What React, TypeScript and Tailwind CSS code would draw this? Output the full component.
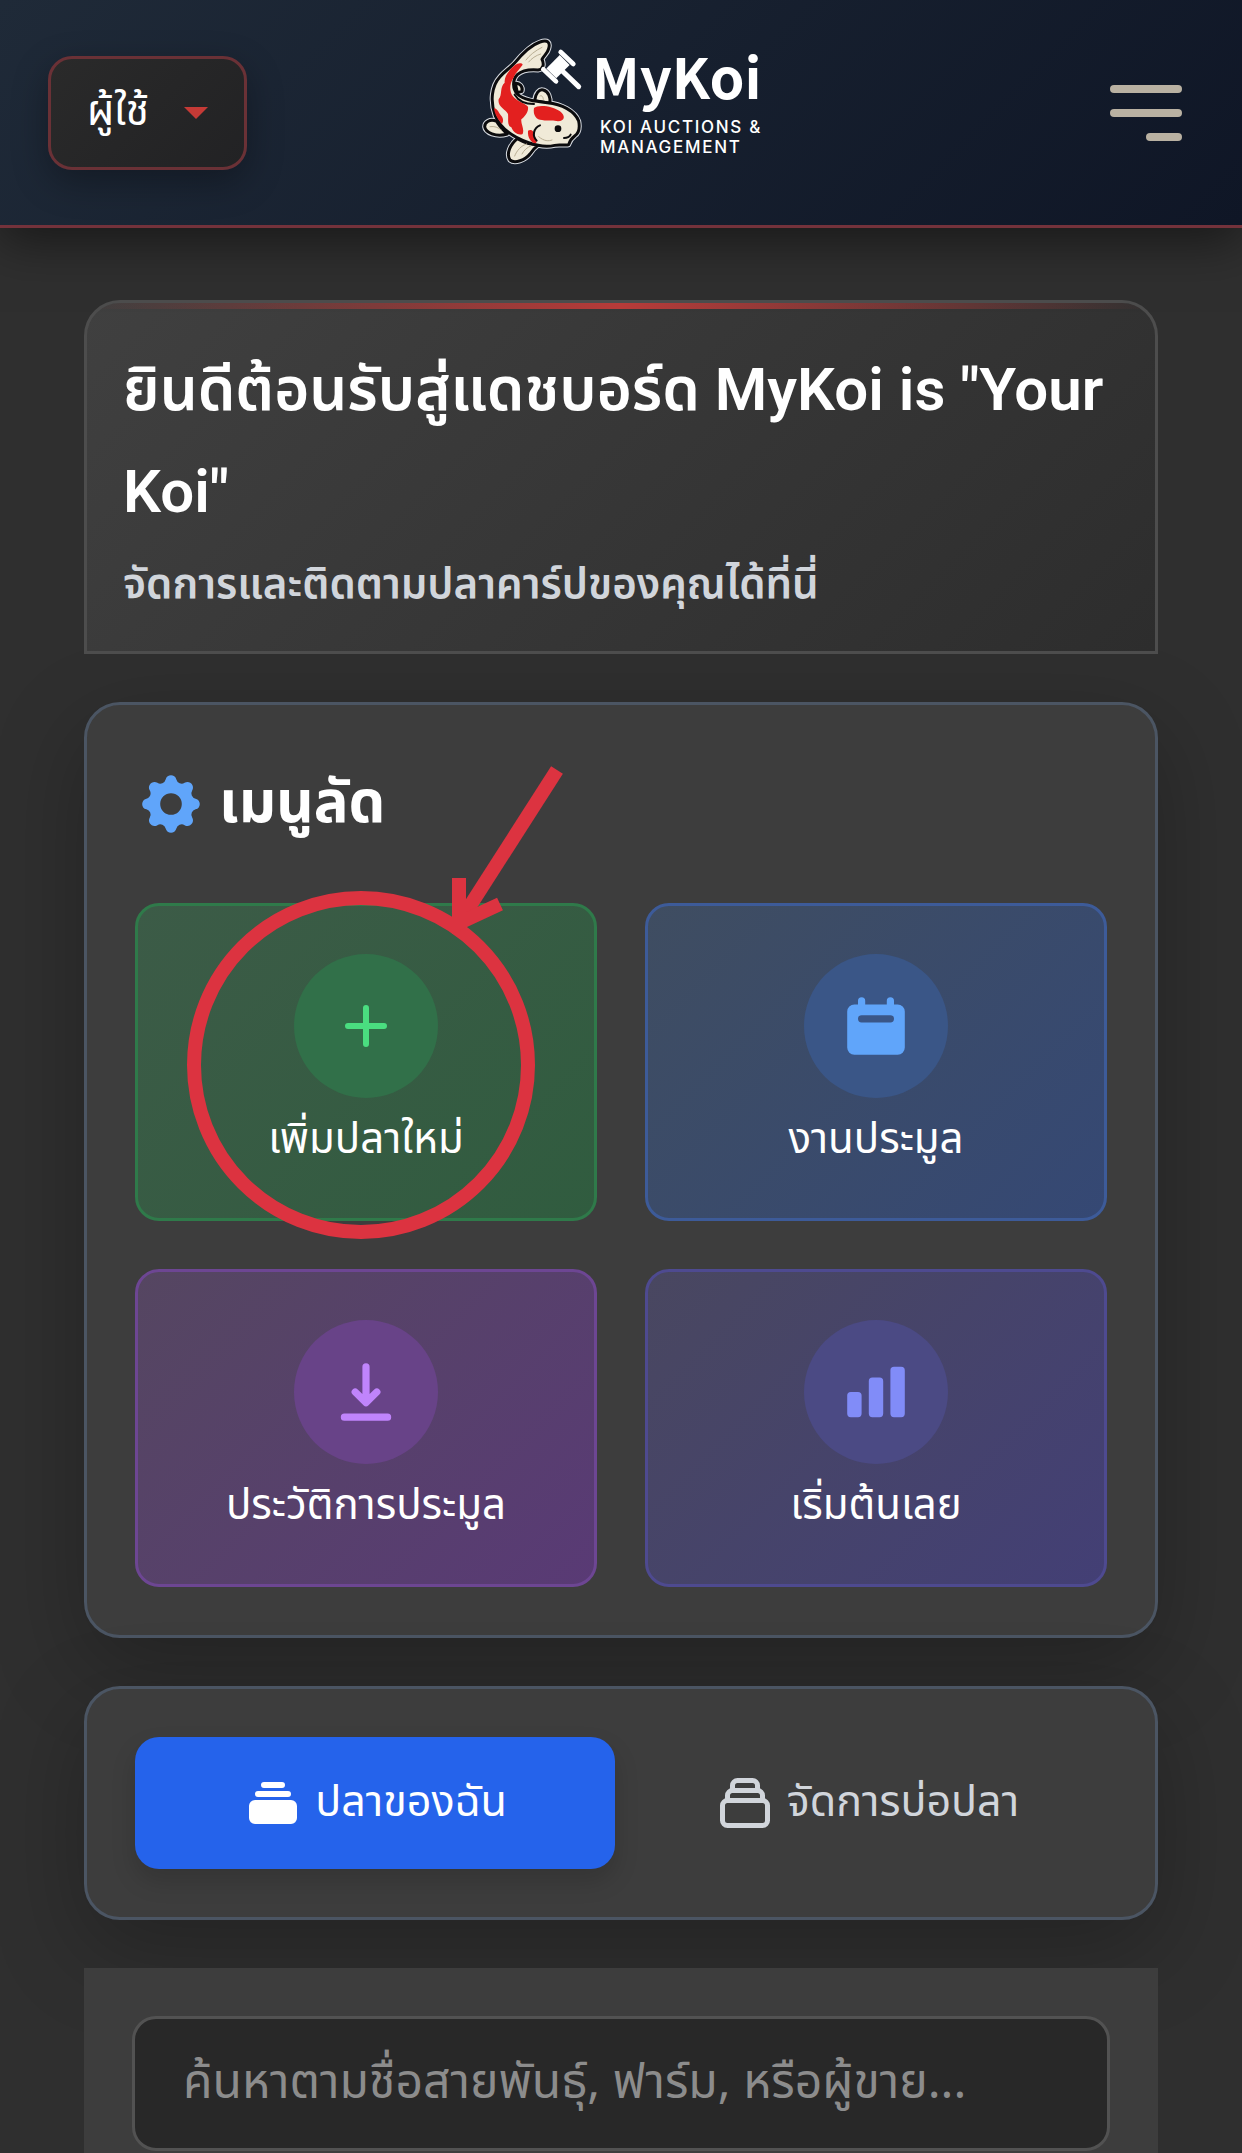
import type { ReactNode } from "react";
import clsx from "clsx";
import {
  HiCalendar,
  HiChartBar,
  HiCog,
  HiCollection,
  HiDownload,
  HiOutlineCollection
} from "react-icons/hi";

type QuickAction = {
  id: string;
  label: string;
  tile: string;
  bubble: string;
  icon: ReactNode;
};

function PlusIcon() {
  return (
    <svg viewBox="0 0 24 24" className="size-18" fill="none" stroke="currentColor" strokeWidth="2" strokeLinecap="round">
      <path d="M12 6v12M6 12h12" />
    </svg>
  );
}

const quickActions: QuickAction[] = [
  {
    id: "add",
    label: "เพิ่มปลาใหม่",
    tile: "border-[#2f7a4a] from-[#3c5b47] to-[#305c3f]",
    bubble: "bg-[#317049] text-[#4ade80]",
    icon: <PlusIcon />
  },
  {
    id: "auctions",
    label: "งานประมูล",
    tile: "border-[#3d5b99] from-[#3f4d61] to-[#354874]",
    bubble: "bg-[#3a5687] text-[#60a5fa]",
    icon: <HiCalendar className="size-18" />
  },
  {
    id: "history",
    label: "ประวัติการประมูล",
    tile: "border-[#6d4693] from-[#554661] to-[#593a75]",
    bubble: "bg-[#684388] text-[#c084fc]",
    icon: <HiDownload className="size-18" />
  },
  {
    id: "start",
    label: "เริ่มต้นเลย",
    tile: "border-[#4e4a90] from-[#494760] to-[#433f75]",
    bubble: "bg-[#4b4a84] text-[#818cf8]",
    icon: <HiChartBar className="size-18" />
  }
];

function KoiMark() {
  const body =
    "M163 132C185 105 210 78 240 68C262 60 272 68 266 88C263 102 252 108 246 120C252 132 252 150 234 152C210 150 188 152 172 166C156 182 158 210 172 224C190 242 225 246 262 250C305 254 345 275 356 305C360 325 356 342 344 350C336 356 330 362 326 376C318 380 300 374 284 378C258 384 228 378 206 370C166 356 124 332 106 290C90 248 94 200 120 172C134 156 150 146 163 132Z";
  const fins = (
    <>
      <path d="M110 306C90 298 74 308 74 322C76 340 108 354 142 344C132 334 118 322 110 306Z" />
      <path d="M172 358C150 376 138 404 150 422C164 434 196 422 210 404C218 392 226 384 236 376C212 378 190 368 172 358Z" />
      <path d="M224 244C226 222 238 208 250 212C266 216 272 236 270 252Z" />
      <path d="M166 192C178 190 190 202 186 216L172 220Z" />
    </>
  );

  return (
    <svg viewBox="60 50 312 390" className="h-[130px] w-[104px]" strokeLinejoin="round" strokeLinecap="round" aria-hidden="true">
      <g fill="none" stroke="#d9dde3" strokeWidth="15">
        <path d={body} />
        {fins}
      </g>
      <g fill="#f0ead8" stroke="#0b0b0d" strokeWidth="9">
        {fins}
        <path d={body} />
      </g>
      <g fill="#e3201f">
        <path d="M164 138C174 130 186 130 188 136C180 148 166 160 160 176C148 196 148 214 158 230C170 246 192 250 204 262C206 278 196 290 184 300C182 314 194 328 188 344C176 350 160 340 154 324C140 318 146 300 144 284C136 268 112 262 116 240C128 226 118 204 134 190C132 170 148 152 164 138Z" />
        <path d="M222 266C234 254 280 260 300 276C318 290 314 306 294 306C276 300 264 306 246 302C230 302 218 288 222 266Z" />
        <path d="M204 334C214 328 224 336 224 350C228 362 234 368 226 372C214 370 202 356 204 334Z" />
        <path d="M102 266C114 268 116 282 126 292C132 302 128 310 126 314C114 300 104 286 102 266Z" />
      </g>
      <g fill="none" stroke="#0b0b0d" strokeWidth="6">
        <path d="M240 318C220 326 216 350 230 364" />
        <path d="M164 226C176 246 196 254 222 254" />
        <path d="M312 356C322 356 330 350 332 346" />
      </g>
      <g fill="none" stroke="#b9ae93" strokeWidth="3">
        <path d="M246 84C226 94 208 108 198 122" />
        <path d="M242 104C228 108 214 118 206 128" />
        <path d="M90 322C104 320 114 324 124 332" />
        <path d="M164 410C170 394 184 378 200 374" />
        <path d="M186 404C192 392 202 384 212 380" />
        <path d="M240 230C244 226 250 232 250 240" />
        <path d="M236 352C252 366 266 366 276 362" />
      </g>
      <circle cx="294" cy="328" r="10" fill="#0b0b0d" />
      <g fill="none" stroke="#ffffff">
        <path d="M302 98L340 134" strokeWidth="14" />
        <path d="M250 150L288 186" strokeWidth="14" />
        <path d="M314 122L274 162" strokeWidth="42" strokeLinecap="butt" />
        <path d="M304 152L356 202" strokeWidth="15" />
      </g>
    </svg>
  );
}

function Header() {
  return (
    <header className="relative z-10 grid h-[228px] grid-cols-[1fr_auto_1fr] items-center border-b-3 border-[#74323b] bg-linear-135 from-[#1f2a38] to-[#0f1626] px-12 shadow-[0_12px_48px_rgba(0,0,0,0.5)]">
      <button
        type="button"
        aria-haspopup="menu"
        className="flex h-[114px] w-[199px] items-center justify-between justify-self-start rounded-3xl border-3 border-[#6a3136] bg-linear-135 from-[#2a2a2a] to-[#222224] px-9 text-[42px] text-white shadow-[0_12px_36px_rgba(0,0,0,0.3)]"
      >
        ผู้ใช้
        <svg viewBox="0 0 24 12" className="h-3 w-6" aria-hidden="true">
          <path d="M0 0h24L12 12z" fill="#c53a36" />
        </svg>
      </button>

      <a href="#" className="flex items-center gap-2 pb-6 text-white">
        <KoiMark />
        <span className="flex flex-col gap-3">
          <span className="font-['Noto_Sans_CJK_SC'] text-[56px] leading-[60px] font-bold">MyKoi</span>
          <span className="pl-2 font-['Inter'] text-[17px] leading-5 font-medium tracking-widest">
            KOI AUCTIONS &amp;
            <br />
            MANAGEMENT
          </span>
        </span>
      </a>

      <button type="button" aria-label="เมนู" className="flex flex-col items-end gap-4 justify-self-end p-3">
        <span className="h-2 w-18 rounded-full bg-[#b9b1a2]" />
        <span className="h-2 w-18 rounded-full bg-[#b9b1a2]" />
        <span className="h-2 w-9 rounded-full bg-[#b9b1a2]" />
      </button>
    </header>
  );
}

// Red ring and arrow pointing at the "add fish" tile
function Pointer() {
  return (
    <svg
      viewBox="187 763 378 477"
      className="pointer-events-none absolute -top-[143px] left-1/2 z-10 -ml-[179px] h-[477px] w-[378px] max-w-none"
      fill="none"
      stroke="#dc3340"
      strokeWidth="14"
      aria-hidden="true"
    >
      <circle cx="361" cy="1065" r="167" />
      <path d="M557 770L459 923" />
      <path d="M459 878V923L500 904" />
    </svg>
  );
}

function QuickMenu() {
  return (
    <section className="rounded-[36px] border-3 border-[#4b5563] bg-[#3d3d3d] p-12 shadow-[0_30px_90px_rgba(0,0,0,0.25)]">
      <h2 className="flex items-center gap-3 text-[58px] leading-[102px] font-bold text-white">
        <HiCog className="size-18 text-[#60a5fa]" />
        เมนูลัด
      </h2>
      <div className="mt-12 grid grid-cols-2 gap-12">
        {quickActions.map((action) => (
          <button
            key={action.id}
            type="button"
            className={clsx(
              "relative flex flex-col items-center rounded-3xl border-3 bg-linear-135 p-12 text-white",
              action.tile
            )}
          >
            <span className={clsx("flex size-36 items-center justify-center rounded-full", action.bubble)}>
              {action.icon}
            </span>
            <span className="mt-3 text-[42px] leading-[60px]">{action.label}</span>
            {action.id === "add" && <Pointer />}
          </button>
        ))}
      </div>
    </section>
  );
}

export default function App() {
  return (
    <div className="min-h-screen bg-[#2f2f2f] font-['Noto_Sans_Thai','Noto_Sans',sans-serif]">
      <Header />
      <main className="flex flex-col gap-12 px-21 pt-18">
        <section className="relative overflow-hidden rounded-t-[36px] border-3 border-[#4d4d4d] bg-linear-135 from-[#404040] to-[#2d2d2d] p-9">
          <div className="absolute inset-x-0 top-0 h-1.5 bg-linear-to-r from-transparent via-[#b83c3a] to-transparent" />
          <h1 className="font-['Roboto','Noto_Sans_Thai',sans-serif] text-[60px] leading-[102px] font-semibold text-white">
            ยินดีต้อนรับสู่แดชบอร์ด MyKoi is "Your Koi"
          </h1>
          <p className="mt-3 text-[42px] leading-[60px] font-semibold text-[#d1d5db]">
            จัดการและติดตามปลาคาร์ปของคุณได้ที่นี่
          </p>
        </section>

        <QuickMenu />

        <nav className="flex gap-3 rounded-[36px] border-3 border-[#4b5563] bg-[#3d3d3d] p-12 shadow-[0_30px_90px_rgba(0,0,0,0.25)]">
          <button
            type="button"
            className="flex h-[132px] flex-1 items-center justify-center gap-3 rounded-3xl bg-[#2563eb] text-[43px] text-white shadow-[0_12px_24px_rgba(0,0,0,0.15)]"
          >
            <HiCollection className="size-15" />
            ปลาของฉัน
          </button>
          <button
            type="button"
            className="flex h-[132px] flex-1 items-center justify-center gap-3 rounded-3xl text-[43px] text-[#d1d5db]"
          >
            <HiOutlineCollection className="size-15" />
            จัดการบ่อปลา
          </button>
        </nav>

        <section className="relative bg-[#3d3d3d] px-12 pt-12 pb-0.5">
          <input
            type="search"
            aria-label="ค้นหา"
            placeholder="ค้นหาตามชื่อสายพันธุ์, ฟาร์ม, หรือผู้ขาย..."
            className="block h-[135px] w-full rounded-3xl border-3 border-[#525252] bg-[#282828] px-12 text-[48px] text-white placeholder:text-[#8c8c8c]"
          />
        </section>
      </main>
    </div>
  );
}
